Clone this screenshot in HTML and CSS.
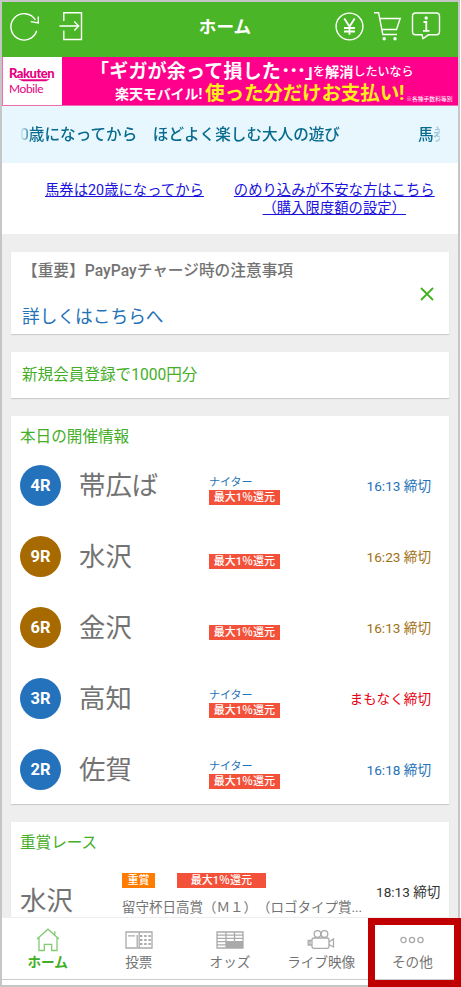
FILE: index.html
```html
<!DOCTYPE html>
<html lang="ja">
<head>
<meta charset="utf-8">
<title>ホーム</title>
<link rel="stylesheet" href="styles.css">
</head>
<body>
<div class="screen">
  <header class="header">
    <div class="header-left">
      <svg class="icon-reload" width="30" height="30" viewBox="0 0 30 30"><path d="M26.7 19.8A13.2 13.2 0 1 1 25.4 9M20.8 10.6L28.3 12V5.5"/></svg>
      <svg class="icon-login" width="24" height="30" viewBox="0 0 24 30"><path d="M4.8 10V1.8H22.5V28.5H4.8V19.5M.5 15H19.5M15.3 10.5L19.7 15L15.3 19.5"/></svg>
    </div>
    <h1 class="title">ホーム</h1>
    <div class="header-right">
      <svg width="29" height="30" viewBox="0 0 29 30"><circle cx="14.5" cy="15.5" r="13.4"/><path class="thick" d="M9.3 7.5L14.5 15.5L19.7 7.5M14.5 15.5V23.8M9 17H20M9 20.5H20"/></svg>
      <svg width="29" height="30" viewBox="0 0 29 30"><path d="M1 1.7H5.6L9.8 23.5H24M7 7.5H27.2L23.5 18.5H9.3"/><circle class="dot" cx="11.2" cy="27.8" r="1.7"/><circle class="dot" cx="22" cy="27.8" r="1.7"/></svg>
      <svg width="30" height="30" viewBox="0 0 30 30"><path d="M4.5 2H25.5Q28.5 2 28.5 5V20.8Q28.5 23.8 25.5 23.8H17.5L12 27.5L11 23.8H4.5Q1.5 23.8 1.5 20.8V5Q1.5 2 4.5 2Z"/><path class="thick" d="M12.5 11H15.3V19.5M12 19.8H18.5"/><circle class="dot" cx="15.2" cy="7" r="1.7"/></svg>
    </div>
  </header>

  <section class="banner">
    <div class="brand">
      <span class="brand-main">Rakuten</span>
      <svg class="brand-line" width="36" height="3" viewBox="0 0 36 3"><path d="M0 .3H32L28 2.2H5Z"/></svg>
      <span class="brand-sub">Mobile</span>
    </div>
    <div class="ad">
      <div class="ad-line first"><span class="ad-big">「ギガが余って損した<span class="ad-dots">･･･</span>」</span><span class="ad-small">を</span><span class="ad-mid">解消</span><span class="ad-small">したいなら</span></div>
      <div class="ad-line second"><span class="ad-name">楽天モバイル!</span><span class="ad-yellow">使った分だけお支払い!</span><span class="ad-note">※各種手数料等別</span></div>
    </div>
  </section>

  <div class="ticker"><div class="ticker-track"><span>0歳になってから　ほどよく楽しむ大人の遊び</span><span>馬券</span></div></div>

  <nav class="links">
    <a href="#">馬券は20歳になってから</a>
    <a href="#">のめり込みが不安な方はこちら<br>（購入限度額の設定）</a>
  </nav>

  <main class="content">
    <section class="card notice">
      <div>
        <div class="notice-title">【重要】PayPayチャージ時の注意事項</div>
        <div class="notice-link">詳しくはこちらへ</div>
      </div>
      <svg class="close" width="14" height="14" viewBox="0 0 14 14"><path d="M1 1L13 13M13 1L1 13"/></svg>
    </section>
    <section class="card promo">新規会員登録で1000円分</section>
    <section class="card races">
      <h2 class="card-title">本日の開催情報</h2>
      <div class="race blue"><span class="round">4R</span><span class="place">帯広ば</span><span class="tags"><span class="night">ナイター</span><span class="tag">最大1％還元</span></span><span class="time">16:13 締切</span></div>
      <div class="race brown"><span class="round">9R</span><span class="place">水沢</span><span class="tags"><span class="tag">最大1％還元</span></span><span class="time">16:23 締切</span></div>
      <div class="race brown"><span class="round">6R</span><span class="place">金沢</span><span class="tags"><span class="tag">最大1％還元</span></span><span class="time">16:13 締切</span></div>
      <div class="race blue soon"><span class="round">3R</span><span class="place">高知</span><span class="tags"><span class="night">ナイター</span><span class="tag">最大1％還元</span></span><span class="time">まもなく締切</span></div>
      <div class="race blue"><span class="round">2R</span><span class="place">佐賀</span><span class="tags"><span class="night">ナイター</span><span class="tag">最大1％還元</span></span><span class="time">16:18 締切</span></div>
    </section>
    <section class="card graded">
      <h2 class="card-title">重賞レース</h2>
      <div class="graded-row">
        <span class="place">水沢</span>
        <div class="graded-info">
          <div class="graded-tags"><span class="tag grade">重賞</span><span class="tag wide">最大1％還元</span></div>
          <div class="graded-name">留守杯日高賞（Ｍ１）（ロゴタイプ賞...</div>
        </div>
        <span class="time">18:13 締切</span>
      </div>
    </section>
  </main>

  <nav class="tabs">
    <div class="tab active">
      <svg width="24" height="24" viewBox="0 0 24 24"><path d="M1 11L12 1.2L23 11M3 9.5V22.5H8.3V16.3H15.7V22.5H21V9.5M18.8 7V3.2"/></svg>
      <span>ホーム</span>
    </div>
    <div class="tab">
      <svg width="28" height="24" viewBox="0 0 28 24"><path d="M1 4H27V20H1ZM3 7.8H10M12.2 7V19M14.2 4V20"/><path class="dots" d="M15 8H26M15 12H26M15 16H26"/></svg>
      <span>投票</span>
    </div>
    <div class="tab">
      <svg width="28" height="24" viewBox="0 0 28 24"><path class="fill" d="M10 14H27V20H10Z"/><path d="M1 4H27V20H1ZM1 7.2H27M1 10.4H27M1 13.6H27M1 16.8H10M10 4V20M18.5 4V14"/></svg>
      <span>オッズ</span>
    </div>
    <div class="tab">
      <svg width="28" height="24" viewBox="0 0 28 24"><circle cx="10.5" cy="6" r="3.3"/><circle cx="17.5" cy="6" r="3.3"/><rect x="5" y="10" width="17" height="10.3" rx="2"/><path d="M22 14L26.5 11V19L22 16.5M5 12.5H1.2V17H5M3 12.5V17"/></svg>
      <span>ライブ映像</span>
    </div>
    <div class="tab other">
      <svg width="24" height="24" viewBox="0 0 24 24"><circle cx="3.5" cy="12" r="2.6"/><circle cx="12" cy="12" r="2.6"/><circle cx="20.5" cy="12" r="2.6"/></svg>
      <span>その他</span>
    </div>
  </nav>
  <div class="highlight"></div>
</div>
</body>
</html>
```
FILE: styles.css
```css
* { box-sizing: border-box; }
body { margin: 0; background: #fff; font-family: Roboto, "Noto Sans CJK JP", sans-serif; color: #737373; overflow: hidden; text-spacing-trim: space-all; }
h1, h2 { margin: 0; font-weight: 400; }
svg { fill: none; flex: none; display: block; }
span { white-space: nowrap; }

.screen { position: relative; width: 460px; height: 987px; border: 2px solid #c6c6c6; display: flex; flex-direction: column; background: #eee; }

.header { flex: none; height: 55px; background: #4ab526; display: grid; grid-template-columns: 1fr auto 1fr; padding: 0 17px 0 8px; color: #fff; }
.header svg { stroke: #fff; stroke-width: 1.4; }
.header .thick { stroke-width: 1.8; }
.header .dot { fill: #fff; stroke: none; }
.header-left { display: flex; gap: 19px; padding-top: 9px; }
.title { font-size: 17.6px; line-height: 50px; font-weight: 700; margin-left: -1px; }
.header-right { display: flex; justify-content: flex-end; gap: 9px; padding-top: 9px; }

.banner { flex: none; height: 49px; display: flex; background: #ff008c; border: 1px solid #f06bb4; border-width: 0 0 1px 1px; }
.brand { width: 59px; background: #fff; color: #e5007f; padding: 9px 0 0 6px; font-family: Lato, sans-serif; }
.brand span { display: block; line-height: 14px; }
.brand-main { font-size: 13px; font-weight: 900; letter-spacing: -.5px; }
.brand-line { margin: -1px 0 0 9px; fill: #e5007f; }
.brand-sub { font-size: 12px; letter-spacing: -.4px; }
.ad { flex: 1; color: #fff; font-weight: 700; }
.ad-line { display: flex; align-items: center; height: 24px; line-height: 24px; }
.first { padding: 5px 0 0 28px; }
.second { padding: 1px 0 0 53px; }
.ad-big { font-size: 19px; letter-spacing: .2px; margin-right: -11px; }
.ad-dots { letter-spacing: -1.6px; }
.ad-small { font-size: 12px; font-weight: 500; }
.ad-mid { font-size: 14.2px; }
.ad-name { font-size: 14px; letter-spacing: -.1px; margin-right: 3px; }
.ad-yellow { font-size: 19.6px; letter-spacing: -.2px; margin-right: 2px; color: #ffee18; }
.ad-note { font-size: 5.8px; font-weight: 400; padding-top: 10px; }

.ticker { flex: none; height: 57px; background: #e8f6fd; padding: 0 18px; color: #086b8d; font-size: 15.6px; font-weight: 500; line-height: 58px; }
.ticker-track { display: flex; gap: 78px; overflow: hidden; height: 57px; -webkit-mask-image: linear-gradient(90deg, transparent, #000 12px, #000 calc(100% - 7px), rgba(0,0,0,.45) calc(100% - 6px), rgba(0,0,0,.2)); }

.links { flex: none; height: 71px; background: #fff; display: flex; gap: 30px; padding: 19px 0 0 43px; font-size: 14.35px; line-height: 17.5px; text-align: center; }
.links a { color: #1a12dc; white-space: nowrap; text-underline-offset: 1px; }

.content { flex: 1; min-height: 0; overflow: hidden; padding: 18px 9px 0; display: flex; flex-direction: column; gap: 18px; }
.card { flex: none; background: #fff; box-shadow: 0 1px 1px #ccc; }
.notice { height: 82px; display: flex; justify-content: space-between; padding: 7px 15px 0 11px; }
.notice-title { font-size: 15.7px; font-weight: 500; line-height: 24px; }
.notice-link { margin-top: 20px; font-size: 17.7px; line-height: 28px; color: #2472b7; }
.close { margin-top: 28px; stroke: #42b01f; stroke-width: 1.8; }
.promo { height: 46px; padding-left: 11px; font-size: 15.6px; line-height: 46px; color: #45ae28; }
.races { height: 388px; }
.card-title { padding: 9px 0 0 9px; height: 34px; font-size: 15.6px; line-height: 24px; color: #45ae28; }
.race { display: grid; grid-template-columns: 59px 130px 1fr auto; align-items: center; height: 71px; padding: 0 18px 0 9px; }
.round { width: 41px; height: 41px; border-radius: 50%; color: #fff; font-size: 16.5px; font-weight: 700; line-height: 42px; text-align: center; }
.place { font-size: 26.4px; line-height: 36px; }
.time { font-size: 13.6px; line-height: 20px; }
.tags { display: flex; flex-direction: column; padding-top: 9px; }
.night { font-size: 11px; line-height: 13px; margin-top: -5px; height: 14px; color: #2472b7; }
.night + .tag { margin-bottom: -5px; }
.tag { width: 71px; height: 15px; background: #f4513b; color: #fff; font-size: 11px; font-weight: 500; line-height: 15px; text-align: center; }
.blue .round { background: #2472bc; }
.brown .round { background: #a66a00; }
.blue .time { color: #2472b7; }
.brown .time { color: #a27116; }
.soon .time { color: #e60012; }

.graded { height: 130px; }
.graded-row { display: grid; grid-template-columns: 102px 1fr auto; padding: 0 9px; margin-top: 17px; }
.graded-row .place { padding-top: 10px; }
.graded-tags { display: flex; gap: 22px; }
.grade { width: 33px; background: #ff7c00; }
.wide { width: 89px; }
.graded-name { margin-top: 9px; font-size: 13.5px; line-height: 20px; white-space: nowrap; }
.graded .time { color: #333; padding-top: 9px; width: 64px; margin-left: -30px; }

.tabs { flex: none; height: 68px; display: grid; grid-template-columns: repeat(5, 1fr); background: #fff; border-top: 1px solid #eee; box-shadow: inset 0 -5px #fff, inset 0 -6px #ccc; }
.tab { display: flex; flex-direction: column; align-items: center; padding-top: 10px; font-size: 13.6px; line-height: 20px; }
.tab svg { stroke: #aaa; stroke-width: 1.3; }
.tab .fill { fill: #aaa; stroke: none; }
.tab .dots { stroke-width: 2.2; stroke-dasharray: 2.4 1.8; }
.active { color: #42ae24; font-weight: 700; }
.active svg { stroke: #84ca73; }
.highlight { position: absolute; left: 366px; top: 916px; width: 93px; height: 69px; border: 7px solid #c00000; }
```
